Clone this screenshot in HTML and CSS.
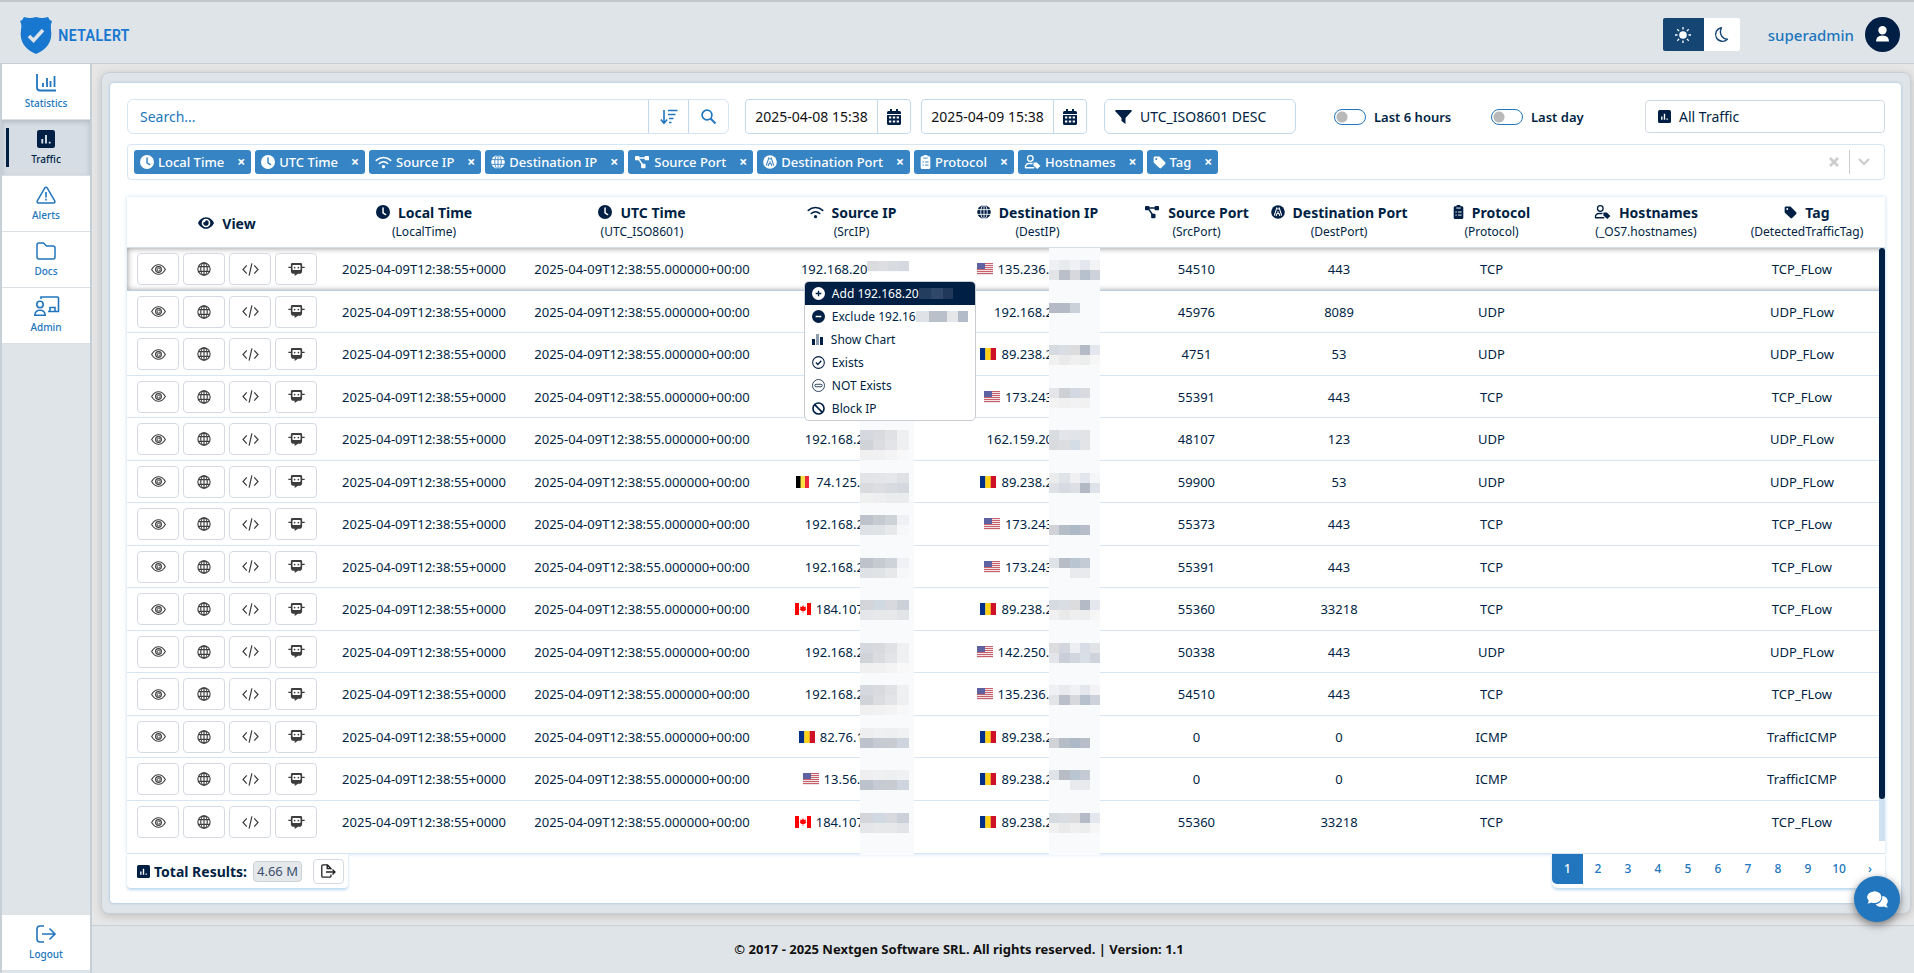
FILE: index.html
```html
<!DOCTYPE html>
<html lang="en">
<head>
<meta charset="utf-8">
<title>NetAlert - Traffic</title>
<link rel="stylesheet" href="styles.css">
</head>
<body>
<svg class="sprite" aria-hidden="true">
  <symbol id="clock" viewBox="0 0 16 16"><path fill-rule="evenodd" d="M16 8A8 8 0 1 1 0 8a8 8 0 0 1 16 0zM8.900 3.500a.8.800 0 0 0-1.700 0V9a.8.800 0 0 0 .35.700l3 1.900a.8.800 0 0 0 .9-1.400L8.900 8.500z"/></symbol>
  <symbol id="wifi" viewBox="0 0 16 16"><g fill="none" stroke="currentColor" stroke-width="1.600" stroke-linecap="round"><path d="M.8 6.400a10.500 10.500 0 0 1 14.400 0"/><path d="M3.800 9.500a6.300 6.300 0 0 1 8.400 0"/></g><circle cx="8" cy="12.700" r="1.600"/></symbol>
  <symbol id="globe-solid" viewBox="0 0 16 16"><circle cx="8" cy="8" r="7.800"/><g fill="none" class="cut" stroke-width="1"><path d="M0 5.300h16M0 10.700h16M8 0v16"/><ellipse cx="8" cy="8" rx="3.700" ry="8"/></g></symbol>
  <symbol id="nodes" viewBox="0 0 16 16"><rect x="0" y="1" width="5" height="5" rx="1"/><rect x="11" y="1" width="5" height="5" rx="1"/><rect x="7" y="10" width="5" height="5" rx="1"/><path d="M4 3.500h8M4.500 5l4 6" fill="none" stroke="currentColor" stroke-width="1.800"/></symbol>
  <symbol id="road" viewBox="0 0 16 16"><circle cx="8" cy="8" r="7.800"/><g fill="none" class="cut" stroke-width="1.200"><path d="M6.800 2.800L3.800 12M9.200 2.800l3 9.200M8 3.500v2M8 7v2M6.500 9.800h3M5.800 12.500l1-2.500M10.200 12.500l-1-2.500"/></g></symbol>
  <symbol id="clip" viewBox="0 0 16 16"><path d="M5.500 1.500A1.500 1.500 0 0 1 7 0h2a1.500 1.500 0 0 1 1.500 1.500H12A1.500 1.500 0 0 1 13.500 3v11.500A1.500 1.500 0 0 1 12 16H4a1.500 1.500 0 0 1-1.500-1.500V3A1.500 1.500 0 0 1 4 1.500z"/><g fill="none" class="cut" stroke-width="1.100"><path d="M5.500 3.500h5M4.500 8h1.500M7.500 8h4M4.500 11.500h1.500M7.500 11.500h4"/></g></symbol>
  <symbol id="usertag" viewBox="0 0 18 16"><circle cx="6.500" cy="4" r="3.200" fill="none" stroke="currentColor" stroke-width="1.500"/><path d="M9 9.700H5.500A4 4 0 0 0 1 14.500h10" fill="none" stroke="currentColor" stroke-width="1.600" stroke-linejoin="round"/><path d="M10 8.500h4l4 4-3.500 3.500L10 12z"/></symbol>
  <symbol id="tag" viewBox="0 0 16 16"><path fill-rule="evenodd" d="M.8 2A1.500 1.500 0 0 1 2.300.500H8l7 7.200a1.500 1.500 0 0 1 0 2L10 14.800a1.500 1.500 0 0 1-2 0L.8 8zM4 5a1.200 1.200 0 1 0 0-2.400A1.200 1.200 0 0 0 4 5z"/></symbol>
  <symbol id="eye-solid" viewBox="0 0 16 16"><path fill-rule="evenodd" d="M8 2.200C3.800 2.200 1.200 5.500 0 8c1.200 2.500 3.800 5.800 8 5.800S14.800 10.500 16 8C14.800 5.500 12.200 2.200 8 2.200zM8 12.300a4.300 4.300 0 1 1 0-8.600 4.300 4.300 0 0 1 0 8.600zM8 5.300a2.700 2.700 0 1 1-2.600 2q1.600.5 2.600-2z"/></symbol>
  <symbol id="eye" viewBox="0 0 16 16"><path d="M.7 8C3 4 5.500 2.900 8 2.900S13 4 15.300 8C13 12 10.500 13.100 8 13.100S3 12 .7 8z" fill="none" stroke="currentColor" stroke-width="1.200"/><circle cx="8" cy="8" r="3.100" fill="none" stroke="currentColor" stroke-width="1.200"/><path d="M8 6.300a1.700 1.700 0 1 1-1.600 1.300Q7.800 7.700 8 6.300z" fill="none" stroke="currentColor" stroke-width=".9"/></symbol>
  <symbol id="globe" viewBox="0 0 16 16"><g fill="none" stroke="currentColor" stroke-width="1.300"><circle cx="8" cy="8" r="7"/><ellipse cx="8" cy="8" rx="3.700" ry="7"/><path d="M1.800 5.300h12.400M1.800 10.700h12.400M8 1v14"/></g></symbol>
  <symbol id="code" viewBox="0 0 18 16"><path d="M5 3.500L1 8l4 4.500M13 3.500L17 8l-4 4.500M10.500 1.500l-3 13" fill="none" stroke="currentColor" stroke-width="1.300"/></symbol>
  <symbol id="bot" viewBox="0 0 18 16"><path fill-rule="evenodd" d="M4.500 1h9A1.500 1.500 0 0 1 15 2.500V5h2.700v1.500H15V9.500a3 3 0 0 1-3 3h-1.500L7 15v-2.500H6a3 3 0 0 1-3-3V6.500H.3V5H3V2.500A1.500 1.500 0 0 1 4.500 1zM5.500 3.200a.8.800 0 0 0-.8.800v3.600a.8.800 0 0 0 .8.800h7a.8.800 0 0 0 .8-.8V4a.8.800 0 0 0-.8-.8z"/><circle cx="7" cy="5.900" r=".9"/><circle cx="11" cy="5.900" r=".9"/></symbol>
  <symbol id="chartbox" viewBox="0 0 16 16"><rect width="16" height="16" rx="2"/><path class="cut" d="M4.700 8v4M8 4.500V12M11.300 10.500v1.500" stroke-width="1.700" fill="none"/></symbol>
  <symbol id="calendar" viewBox="0 0 14 16"><path fill-rule="evenodd" d="M3 0h2v2h4V0h2v2h1.500A1.500 1.500 0 0 1 14 3.500V5H0V3.500A1.500 1.500 0 0 1 1.500 2H3zM0 6h14v8.500a1.500 1.500 0 0 1-1.500 1.500h-11A1.500 1.500 0 0 1 0 14.500zM2 7.500v2h2.300v-2zM5.800 7.500v2h2.400v-2zM9.700 7.500v2H12v-2zM2 11.500v2h2.300v-2zM5.800 11.500v2h2.400v-2zM9.700 11.500v2H12v-2z"/></symbol>
</svg>

<div class="app">
  <header class="topbar">
    <a class="brand" href="#">
      <svg class="brand-mark" viewBox="0 0 32 38"><path d="M4 1Q10 3 16 1q6 2 12 0 1 3 4 4-2 4-1 9c2 12-5 20-15 24C6 34-1 26 1 14 2 9 1 7 0 5q3-1 4-4z"/><path d="M9 20l4.500 4.500L23 14" fill="none" stroke="#dfe4e8" stroke-width="3.500"/></svg>
      <span class="brand-name">NETALERT</span>
    </a>
    <div class="topbar-right">
      <div class="theme">
        <button class="theme-btn theme-on" aria-label="Light theme"><svg width="16" height="16" viewBox="0 0 16 16"><circle cx="8" cy="8" r="3.800"/><path d="M8 0v2.500M8 13.500V16M0 8h2.500M13.500 8H16M2.300 2.300l1.800 1.800M11.900 11.900l1.800 1.800M2.300 13.700l1.800-1.800M11.900 4.100l1.800-1.800" stroke="currentColor" stroke-width="1.300"/></svg></button>
        <button class="theme-btn" aria-label="Dark theme"><svg width="14" height="15" viewBox="0 0 14 16"><path d="M6.500.8A7.300 7.300 0 1 0 12.800 13C8 13 3 7.500 6.500.8z" fill="none" stroke="currentColor" stroke-width="1.500" stroke-linejoin="round"/></svg></button>
      </div>
      <a class="user" href="#">superadmin
        <svg class="avatar" viewBox="0 0 35 35"><circle cx="17.500" cy="17.500" r="17.500"/><path fill="#fff" d="M17.500 9a4.200 4.200 0 1 1 0 8.400 4.200 4.200 0 0 1 0-8.400zM11 24.500q0-6 6.500-6t6.500 6z"/></svg>
      </a>
    </div>
  </header>

  <nav class="side">
    <a class="side-item" href="#"><svg width="20" height="18" viewBox="0 0 20 18"><path d="M1 0v13.500Q1 16.500 4 16.500h16M7 9v4M11 4v9M14.500 7v6M18.500 2v11" fill="none" stroke="currentColor" stroke-width="1.800"/></svg>Statistics</a>
    <a class="side-item side-active" href="#"><svg width="18" height="18"><use href="#chartbox"/></svg>Traffic</a>
    <a class="side-item" href="#"><svg width="20" height="18" viewBox="0 0 20 18"><path d="M10 1.200q.8 0 1.300.9l7.400 12.800q.8 2-1.200 2.200H2.500q-2-.2-1.200-2.200L8.700 2.100Q9.200 1.200 10 1.200z" fill="none" stroke="currentColor" stroke-width="1.500"/><path d="M10 6v5.500M10 12.800v1.800" stroke="currentColor" stroke-width="1.600"/></svg>Alerts</a>
    <a class="side-item" href="#"><svg width="20" height="18" viewBox="0 0 20 18"><path d="M1 3Q1 1 3 1h4.500L10.500 4H17q2 0 2 2v9q0 2-2 2H3q-2 0-2-2z" fill="none" stroke="currentColor" stroke-width="1.500"/></svg>Docs</a>
    <a class="side-item" href="#"><svg width="25" height="20" viewBox="0 0 25 20"><g fill="none" stroke="currentColor" stroke-width="1.600"><circle cx="6" cy="8.500" r="3.200"/><path d="M.8 19.200q.3-5 5.200-5t5.200 5zM7 3V1h16.500q1 0 1 1v13.500H14M16 15v-3.500h5V15"/></g></svg>Admin</a>
    <a class="side-item side-last" href="#"><svg width="20" height="18" viewBox="0 0 20 18"><path d="M8 1H4Q1 1 1 4v10q0 3 3 3h4M6 9h13M13.500 3.500L19 9l-5.500 5.500" fill="none" stroke="currentColor" stroke-width="1.600"/></svg>Logout</a>
  </nav>

  <main class="main">
    <div class="frame"><div class="card">
      <div class="filters">
        <div class="search">
          <input class="search-input" type="text" placeholder="Search..." aria-label="Search">
          <button class="search-btn" aria-label="Sort"><svg width="18" height="16" viewBox="0 0 18 16"><path d="M4 1v13M.8 10.500L4 14.200l3.200-3.700M8 1.500h9.500M8 5.500h7.500M9 9.500h4.500M9 13.500h2.500" fill="none" stroke="currentColor" stroke-width="1.600"/></svg></button>
          <button class="search-btn" aria-label="Run search"><svg width="15" height="15" viewBox="0 0 15 15"><circle cx="6" cy="6" r="4.900" fill="none" stroke="currentColor" stroke-width="1.700"/><path d="M9.500 9.500l5 5" stroke="currentColor" stroke-width="2"/></svg></button>
        </div>
        <div class="date"><input type="text" value="2025-04-08 15:38" aria-label="From"><button aria-label="Pick start date"><svg width="14" height="16"><use href="#calendar"/></svg></button></div>
        <div class="date date-to"><input type="text" value="2025-04-09 15:38" aria-label="To"><button aria-label="Pick end date"><svg width="14" height="16"><use href="#calendar"/></svg></button></div>
        <button class="sortby"><svg width="17" height="14" viewBox="0 0 17 14"><path d="M.8 0h15.400q1 .5.500 1.300L10.500 8v6L6.500 11V8L.3 1.300Q-.2.500.8 0z"/></svg>UTC_ISO8601 DESC</button>
        <label class="switch"><input type="checkbox">Last 6 hours</label>
        <label class="switch switch-day"><input type="checkbox">Last day</label>
        <button class="scope"><svg width="13" height="13"><use href="#chartbox"/></svg>All Traffic</button>
      </div>

      <div class="tags">
        <span class="tag"><svg width="14" height="14"><use href="#clock"/></svg>Local Time<button aria-label="Remove Local Time">×</button></span>
        <span class="tag"><svg width="14" height="14"><use href="#clock"/></svg>UTC Time<button aria-label="Remove UTC Time">×</button></span>
        <span class="tag"><svg width="17" height="16"><use href="#wifi"/></svg>Source IP<button aria-label="Remove Source IP">×</button></span>
        <span class="tag"><svg width="14" height="14"><use href="#globe-solid"/></svg>Destination IP<button aria-label="Remove Destination IP">×</button></span>
        <span class="tag"><svg width="16" height="14"><use href="#nodes"/></svg>Source Port<button aria-label="Remove Source Port">×</button></span>
        <span class="tag"><svg width="14" height="14"><use href="#road"/></svg>Destination Port<button aria-label="Remove Destination Port">×</button></span>
        <span class="tag"><svg width="11" height="14" viewBox="2 0 12 16"><use href="#clip" width="16" height="16"/></svg>Protocol<button aria-label="Remove Protocol">×</button></span>
        <span class="tag"><svg width="17" height="14"><use href="#usertag"/></svg>Hostnames<button aria-label="Remove Hostnames">×</button></span>
        <span class="tag"><svg width="13" height="13"><use href="#tag"/></svg>Tag<button aria-label="Remove Tag">×</button></span>
        <div class="tags-end">
          <button aria-label="Clear all"><svg width="10" height="10" viewBox="0 0 10 10"><path d="M1 1l8 8M9 1L1 9" stroke="currentColor" stroke-width="2.600"/></svg></button>
          <button class="tags-open" aria-label="Open list"><svg width="12" height="8" viewBox="0 0 12 8"><path d="M1 1l5 5 5-5" fill="none" stroke="currentColor" stroke-width="2.200"/></svg></button>
        </div>
      </div>

      <div class="grid-wrap">
        <table class="grid">
          <colgroup><col class="c-view"><col class="c-local"><col class="c-utc"><col class="c-src"><col class="c-dst"><col class="c-sport"><col class="c-dport"><col class="c-proto"><col class="c-host"><col class="c-tag"></colgroup>
          <thead><tr>
            <th><div class="th-name"><svg width="16" height="16"><use href="#eye-solid"/></svg>View</div></th>
            <th><div class="th-name"><svg width="14" height="14"><use href="#clock"/></svg>Local Time</div><small>(LocalTime)</small></th>
            <th><div class="th-name"><svg width="14" height="14"><use href="#clock"/></svg>UTC Time</div><small>(UTC_ISO8601)</small></th>
            <th><div class="th-name"><svg width="17" height="16"><use href="#wifi"/></svg>Source IP</div><small>(SrcIP)</small></th>
            <th><div class="th-name"><svg width="14" height="14"><use href="#globe-solid"/></svg>Destination IP</div><small>(DestIP)</small></th>
            <th><div class="th-name"><svg width="16" height="14"><use href="#nodes"/></svg>Source Port</div><small>(SrcPort)</small></th>
            <th><div class="th-name"><svg width="14" height="14"><use href="#road"/></svg>Destination Port</div><small>(DestPort)</small></th>
            <th><div class="th-name"><svg width="11" height="14" viewBox="2 0 12 16"><use href="#clip" width="16" height="16"/></svg>Protocol</div><small>(Protocol)</small></th>
            <th><div class="th-name"><svg width="17" height="14"><use href="#usertag"/></svg>Hostnames</div><small>(_OS7.hostnames)</small></th>
            <th><div class="th-name"><svg width="13" height="13"><use href="#tag"/></svg>Tag</div><small>(DetectedTrafficTag)</small></th>
          </tr></thead>
          <tbody id="rows"></tbody>
        </table>
        <div class="scroll"><div class="scroll-thumb"></div></div>
        <menu class="menu">
          <li><button class="menu-on"><svg width="13" height="13" viewBox="0 0 16 16"><circle cx="8" cy="8" r="8"/><path d="M4.500 8h7M8 4.500v7" stroke="#001f44" stroke-width="1.700"/></svg>Add 192.168.20<i class="veil veil-dark"></i></button></li>
          <li><button><svg width="13" height="13" viewBox="0 0 16 16"><circle cx="8" cy="8" r="8"/><path d="M4.500 8h7" stroke="#fff" stroke-width="1.700"/></svg>Exclude 192.16<i class="veil"></i></button></li>
          <li><button class="menu-chart"><svg width="11" height="11" viewBox="0 0 11 11"><path d="M0 5h3v6H0zM8 3h3v8H8z"/><path fill="#8d9cae" d="M4 0h3v11H4z"/></svg>Show Chart</button></li>
          <li><button><svg width="13" height="13" viewBox="0 0 16 16"><circle cx="8" cy="8" r="7.200" fill="none" stroke="currentColor" stroke-width="1.300"/><path d="M4.800 8l2.400 2.500 4.200-4.700" fill="none" stroke="currentColor" stroke-width="1.600"/></svg>Exists</button></li>
          <li><button><svg width="13" height="13" viewBox="0 0 16 16"><circle cx="8" cy="8" r="7.400" fill="none" stroke="currentColor" stroke-width="1"/><rect x="3.500" y="6.500" width="9" height="3" rx="1.500" fill="none" stroke="currentColor" stroke-width="1"/></svg>NOT Exists</button></li>
          <li><button><svg width="13" height="13" viewBox="0 0 16 16"><path d="M3 3l10 10" stroke="currentColor" stroke-width="2"/><circle cx="8" cy="8" r="6.800" fill="none" stroke="currentColor" stroke-width="2"/></svg>Block IP</button></li>
        </menu>
      </div>

      <div class="below">
        <div class="total"><svg width="13" height="13"><use href="#chartbox"/></svg><strong>Total Results:</strong><span class="count">4.66 M</span><button class="export" aria-label="Export"><svg width="15" height="14" viewBox="0 0 15 14"><path d="M10 5.500V4.500L6.500.8H2Q.8.800.8 2v10q0 1.200 1.200 1.200h7Q10 13.200 10 12v-1.500M6.200 1v3.500H10M5 8h9M11.500 5.500L14 8l-2.500 2.500" fill="none" stroke="currentColor" stroke-width="1.300"/></svg></button></div>
        <nav class="pages" aria-label="Pages"><a class="page-on" href="#">1</a><a href="#">2</a><a href="#">3</a><a href="#">4</a><a href="#">5</a><a href="#">6</a><a href="#">7</a><a href="#">8</a><a href="#">9</a><a class="page-wide" href="#">10</a><a href="#">›</a></nav>
      </div>
    </div></div>
  </main>

  <footer class="footer">© 2017 - 2025 Nextgen Software SRL. All rights reserved. | Version: 1.1</footer>
</div>
<button class="chat" aria-label="Open chat"><svg width="21" height="17" viewBox="0 0 21 17"><path d="M7.300.5c4 0 7 2.500 7 5.700s-3 5.700-7 5.700q-1.500 0-2.800-.5Q2.500 12.500.5 12.500q1-1.200 1.300-3Q.3 8.100.3 6.200.3 3 7.300.5z"/><ellipse cx="7.300" cy="6" rx="7" ry="5.500"/><path d="M15.300 5c3.200.3 5.500 2.500 5.500 5.200q0 1.800-1.400 3.300.4 1.700 1.400 3-2.200 0-4-1.100-1.200.4-2.500.4c-2.600 0-4.600-1-5.700-2.600 4-.4 7-3.500 6.700-8.200z"/></svg></button>
<script src="app.js"></script>
</body>
</html>
```

FILE: styles.css
```css
:root {
  --navy: #001f44;
  --blue: #2176bd;
  --line: #d6e6f4;
  --shell: #dfe4e8;
  --edge: #c8d0d7;
}

* { box-sizing: border-box; }

body {
  margin: 0;
  font-family: "Noto Sans", sans-serif;
  font-size: 13px;
  color: var(--navy);
}

svg { display: block; flex: none; fill: currentColor; overflow: visible; }
a { color: inherit; text-decoration: none; }
button, input { font: inherit; color: inherit; margin: 0; padding: 0; border: 0; background: none; }
.sprite { position: absolute; width: 0; height: 0; overflow: hidden; }
.cut { stroke: var(--cut, #fff); }

.app {
  display: grid;
  grid-template: auto 1fr auto / 92px 1fr;
  min-height: 100vh;
  background: #e7e7e7;
}

/* top bar */
.topbar {
  grid-column: 1 / 3;
  display: flex;
  align-items: center;
  justify-content: space-between;
  height: 64px;
  padding: 4px 14px 0 20px;
  background: var(--shell);
  border-top: 2px solid #c3c7ca;
  border-bottom: 1px solid var(--edge);
}
.brand { display: flex; align-items: center; gap: 6px; color: #1878d0; }
.brand-mark { width: 32px; height: 38px; }
.brand-name { font-family: "Roboto Condensed", "Liberation Sans Narrow", "Roboto", sans-serif; font-size: 17px; font-weight: 500; line-height: 20px; }
.topbar-right { display: flex; align-items: center; gap: 28px; }
.theme { display: flex; }
.theme-btn { display: grid; place-items: center; width: 36px; height: 33px; background: #fff; color: #154673; border-radius: 0 2px 2px 0; }
.theme-on { width: 41px; background: #154673; color: #fff; border-radius: 2px 0 0 2px; }
.user { display: flex; align-items: center; gap: 11px; font-size: 15px; font-weight: 500; color: var(--blue); }
.avatar { width: 35px; height: 35px; color: var(--navy); }

/* side navigation */
.side {
  grid-row: 2 / 4;
  display: flex;
  flex-direction: column;
  padding-bottom: 2px;
  background: var(--shell);
  border: solid var(--edge);
  border-width: 0 2px;
}
.side-item {
  display: flex;
  flex-direction: column;
  align-items: center;
  justify-content: flex-end;
  gap: 2px;
  height: 56px;
  padding-bottom: 7px;
  background: #fff;
  border-bottom: 1px solid #dbe0e4;
  color: var(--blue);
  font-size: 10px;
  font-weight: 500;
  line-height: 18px;
}
.side-active {
  position: relative;
  --cut: #d6dde5;
  background: #d6dde5;
  color: var(--navy);
  box-shadow: inset 0 2px 5px #b2bac2;
}
.side-active::before { content: ""; position: absolute; left: 4px; top: 8px; bottom: 8px; width: 3px; background: var(--navy); }
.side-last { margin-top: auto; }

/* content shell */
.main { padding: 8px 3px 11px 9px; }
.frame { height: 100%; padding: 10px 9px 10px 8px; background: var(--shell); border: 1px solid var(--edge); border-radius: 8px; box-shadow: 0 2px 10px #bdbdbd; }
.card { display: flex; flex-direction: column; height: 100%; padding: 16px 16px 15px 17px; background: #fff; border-radius: 4px; box-shadow: 0 0 3px #8fbce0; }

/* filter bar */
.filters { display: flex; align-items: center; height: 35px; }
.search { display: flex; flex: 1; height: 35px; border: 1px solid var(--line); border-radius: 6px; }
.search-input { flex: 1; min-width: 0; padding: 0 12px; color: var(--blue); font-size: 14px; outline: none; }
.search-input::placeholder { color: var(--blue); opacity: 1; }
.search-btn { display: grid; place-items: center; width: 40px; border-left: 1px solid #c3d9ed; color: var(--blue); }
.date { display: flex; width: 166px; height: 35px; margin-left: 16px; border: 1px solid #c3d9ed; border-radius: 4px; font-size: 14px; color: #111; }
.date-to { margin-left: 10px; }
.date input { flex: 1; min-width: 0; text-align: center; }
.date button { display: grid; place-items: center; width: 33px; border-left: 1px solid #c3d9ed; color: var(--navy); }
.sortby { display: flex; align-items: center; gap: 8px; width: 192px; height: 35px; margin-left: 17px; padding-left: 10px; border: 1px solid #c3d9ed; border-radius: 6px; font-size: 14px; }
.switch { display: flex; align-items: center; gap: 8px; width: 157px; margin-left: 38px; font-weight: 600; }
.switch-day { width: 154px; margin-left: 0; }
.switch input {
  appearance: none;
  width: 32px;
  height: 16px;
  border: 1px solid var(--blue);
  border-radius: 8px;
  background: radial-gradient(circle at 7px 7px, #b9b9b9 5px, #fff 6px);
}
.scope { display: flex; align-items: center; gap: 8px; width: 240px; height: 33px; padding-left: 12px; border: 1px solid #d3d9e3; border-radius: 4px; font-size: 14px; }

/* column picker */
.tags { display: flex; align-items: center; gap: 4px; height: 36px; margin-top: 10px; padding: 0 6px; border: 1px solid var(--line); border-radius: 4px; }
.tag { display: flex; align-items: center; gap: 4px; height: 24px; padding: 0 6px; border-radius: 3px; background: #3784c4; color: #fff; --cut: #3784c4; font-weight: 500; white-space: nowrap; }
.tag button { margin-left: 9px; font-size: 14px; line-height: 14px; font-weight: 700; }
.tags-end { display: flex; align-items: center; margin-left: auto; color: #ccc; }
.tags-end button { display: grid; place-items: center; width: 30px; height: 24px; }
.tags-end .tags-open { width: 29px; border-left: 1px solid #ccc; }

/* traffic table */
.grid-wrap { position: relative; flex: 1; margin-top: 17px; border-bottom: 1px solid var(--line); box-shadow: 0 0 4px #c6def2; }
.grid { width: 100%; table-layout: fixed; border-collapse: separate; border-spacing: 0; text-align: center; }
.c-view { width: 200px; }
.c-local { width: 11.04%; }
.c-utc { width: 13.76%; }
.c-src { width: 10.07%; }
.c-dst { width: 11.09%; }
.c-sport { width: 7%; }
.c-dport { width: 9.22%; }
.c-proto { width: 8.13%; }
.c-host { width: 9.44%; }
th { height: 51px; padding: 2px 0 0; border-bottom: 1px solid #d5dfe8; font-weight: 400; }
.th-name { display: flex; align-items: center; justify-content: center; gap: 8px; height: 18px; font-size: 14px; font-weight: 700; white-space: nowrap; }
th small { display: block; font-size: 12px; line-height: 22px; }
td { position: relative; height: 43px; padding: 0; border-bottom: 1px solid var(--line); }
tr:nth-child(even) td { height: 42px; }
tr:last-child td { border-bottom: 0; }
td:last-child { padding-right: 10px; }
.row-on { box-shadow: inset 0 0 6px #8a8a8a; }
.row-on td { border-bottom-color: #b5cde2; }
.view { display: flex; gap: 4px; padding-left: 10px; }
.view button { display: grid; place-items: center; width: 42px; height: 32px; border: 1px solid #d5dae2; border-radius: 4px; background: #fff; color: #3d3d3d; }
.ip { display: flex; justify-content: flex-end; gap: 5px; width: 56%; white-space: nowrap; }
.ip-under { width: 58%; }
.ip-src { width: 55%; }
.ip-src.ip-under { width: 57%; }
.ip-first { width: 59%; }
.flag { width: 16px; height: 12px; align-self: center; }

/* redaction mosaics */
.mosaic { position: absolute; left: 56%; top: 0; bottom: -1px; width: 51px; padding-top: 12px; background: #f9fafb; }
.mosaic-src { left: 55%; width: 54px; padding-right: 5px; }
.mosaic-short { left: 59%; top: 13px; bottom: 18px; width: 42px; padding: 0; }
tr:last-child .mosaic { bottom: -12px; }
.tiles { display: flex; height: 10px; }
.tiles i { flex: 1; }
.scroll { position: absolute; right: 0; top: 51px; bottom: 12px; width: 6px; background: #cfe1f1; }
.scroll-thumb { height: 93%; border-radius: 3px; background: var(--navy); }

/* context menu */
.menu { position: absolute; left: 38.5%; top: 84px; width: 172px; margin: 0; padding: 0; list-style: none; background: #fff; border: 1px solid #c8ccd0; border-radius: 5px; overflow: hidden; }
.menu button { display: flex; align-items: center; gap: 7px; width: 100%; height: 23px; padding-left: 7px; font-size: 12px; }
.menu .menu-on { background: var(--navy); color: #fff; }
.menu .menu-chart { gap: 8px; }
.veil { width: 52px; height: 11px; margin-left: -7px; background: linear-gradient(90deg, #dfe2e6 25%, #b9c0ca 25% 60%, #e4e6e9 60% 80%, #b3bbc8 80%); }
.veil-dark { width: 34px; background: linear-gradient(90deg, #233d5e 35%, #2f486a 35% 70%, #20395b 70%); }

/* summary and pages */
.below { display: flex; align-items: flex-start; justify-content: space-between; }
.total { display: flex; align-items: center; gap: 4px; width: 221px; height: 34px; padding: 0 4px 0 10px; background: #fff; border-radius: 0 0 4px 4px; box-shadow: 0 2px 3px #bcd8ef; font-size: 14px; position: relative; }
.count { margin-left: 2px; padding: 0 3px; line-height: 19px; background: #e4e8eb; border: 1px solid #cdd2d7; border-radius: 4px; color: #3c4f6c; font-size: 13px; }
.export { display: grid; place-items: center; width: 31px; height: 25px; margin-left: auto; border: 1px solid #d5dae2; border-radius: 4px; color: #222; }
.pages { display: flex; position: relative; height: 34px; background: #fff; border-radius: 0 0 6px 6px; box-shadow: 0 2px 3px #bcd8ef; color: var(--blue); font-size: 12px; font-weight: 500; line-height: 30px; text-align: center; }
.pages a { width: 30px; height: 30px; }
.pages .page-on { width: 31px; background: var(--blue); color: #fff; border-radius: 0 0 0 5px; }
.pages .page-wide { width: 32px; }

.footer { padding-right: 88px; line-height: 47px; text-align: center; font-size: 13px; font-weight: 700; color: #111; background: var(--shell); border-top: 1px solid var(--edge); }
.chat { position: fixed; right: 14px; bottom: 51px; display: grid; place-items: center; width: 46px; height: 46px; border-radius: 50%; background: var(--blue); color: #fff; box-shadow: 0 3px 8px #777; }
```

FILE: app.js
```js
const LOCAL = "2025-04-09T12:38:55+0000";
const UTC = "2025-04-09T12:38:55.000000+00:00";

const FLAGS = {
  us: '<path fill="#f1e4e6" d="M0 0h16v12H0z"/><path stroke="#c8606b" d="M0 .5h16M0 2.500h16M0 4.500h16M0 6.500h16M0 8.500h16M0 10.500h16"/><path fill="#5f62a0" d="M0 0h8v6H0z"/>',
  ro: '<path fill="#002f87" d="M0 0h5.500v12H0z"/><path fill="#fcd116" d="M5.300 0h5.500v12H5.300z"/><path fill="#ce1126" d="M10.700 0H16v12h-5.300z"/>',
  be: '<path fill="#000" d="M1 0h5v12H1z"/><path fill="#fae042" d="M5.500 0h5v12h-5z"/><path fill="#ed2939" d="M10 0h4v12h-4z"/>',
  ca: '<path fill="#fff" d="M0 0h16v12H0z"/><path fill="#f00" d="M0 0h4v12H0zM12 0h4v12h-4zM8 2l1 2 2-.5-.5 2 1 .8-2 1.700H8.300V10h-.6V8H6.500l-2-1.700 1-.8-.5-2 2 .5z"/>'
};

/* each mosaic is a list of strips, each strip a list of tile colours */
const S1 = [["#d6d8df", "#d8dade", "#e0e1e5", "#eff0f2"], ["#d0d4d9", "#dadce0", "#e3e4e8", "#eff0f2"], ["#f0f0f0", "#f1f1f2", "#f4f4f5", "#f8f8f9"]];
const S2 = [["#e2e4e8", "#e4e5e8", "#e6e7ea", "#dfe1e5"], ["#d9dbdf", "#dcdee2", "#d8dbe0", "#d5d8de"], ["#eff0f0", "#eeeef0", "#ebecee", "#ebecee"]];
const S3 = [["#bec2cb", "#c6cad1", "#ced2d9", "#eff1f4"], ["#dee1e5", "#e0e3e6", "#e7e8ea", "#f6f7f8"]];
const S4 = [["#d3d5da", "#d0d8e2", "#d7d9de", "#ccd1d9"], ["#e5e6e9", "#e7e8ea", "#e6e8ea", "#e2e4e8"]];
const S5 = [["#eeeef0", "#eff0f2", "#eeeff1", "#f0f1f2"], ["#bdc3cd", "#c6cbd3", "#c8cbd2", "#ced5de"]];
const D1 = [["#eff0f3", "#e8eaee", "#eff1f5", "#e4e8ee", "#f3f3f6"], ["#e2e4e8", "#bbbfc9", "#d6d8dd", "#b7c1cd", "#cdd2db"]];
const D2 = [["#b4bbc6", "#b4bbc6", "#cbd1d9", "#f9fafb", "#f9fafb"]];
const D3 = [["#d6dae1", "#dadee4", "#dcdcdf", "#b4bbc6", "#e4e8ee"], ["#f0f0f0", "#eaeaeb", "#efeff0", "#eceded", "#f6f6f7"]];
const D4 = [["#e4e5e8", "#cfd0d6", "#d2d9e3", "#d8dadf", "#f9fafb"], ["#f3f3f4", "#f0f0f1", "#f2f2f4", "#f1f1f2", "#f9fafb"]];
const D5 = [["#d9dce1", "#e3e5e8", "#e1e4e8", "#e2e3e7", "#f9fafb"], ["#d9dbdf", "#dcdde1", "#d4dce6", "#e3e4e7", "#f9fafb"]];
const D6 = [["#e9ebed", "#dfe2e6", "#f0f0f2", "#e3e7ed", "#f5f6f8"], ["#dee1e6", "#d7dbe1", "#dcdfe4", "#b2b9c4", "#dee3e9"]];
const D7 = [["#f9fafb"], ["#d0d2d7", "#b5bdc7", "#adb9c7", "#b7bec9", "#f9fafb"]];
const D8 = [["#dfe3e8", "#b7bcc5", "#bac5d2", "#c5cbd4", "#f9fafb"], ["#f9fafb", "#f9fafb", "#e9eaed", "#e9eaed", "#f9fafb"]];
const D9 = [["#dddde0", "#d3d6de", "#eceef1", "#d8dde5", "#e1e3e7"], ["#e4e5e8", "#c9ced8", "#d2d6df", "#d9dfe7", "#cfd3db"]];

const rows = [
  ["", "192.168.20", S2, "us", "135.236.", D1, 54510, 443, "TCP", "TCP_FLow"],
  ["", "", null, "", "192.168.2", D2, 45976, 8089, "UDP", "UDP_FLow"],
  ["", "", null, "ro", "89.238.2", D3, 4751, 53, "UDP", "UDP_FLow"],
  ["", "", null, "us", "173.243", D4, 55391, 443, "TCP", "TCP_FLow"],
  ["", "192.168.2", S1, "", "162.159.20", D5, 48107, 123, "UDP", "UDP_FLow"],
  ["be", "74.125.", S2, "ro", "89.238.2", D6, 59900, 53, "UDP", "UDP_FLow"],
  ["", "192.168.2", S3, "us", "173.243", D7, 55373, 443, "TCP", "TCP_FLow"],
  ["", "192.168.2", S3, "us", "173.243", D8, 55391, 443, "TCP", "TCP_FLow"],
  ["ca", "184.107", S4, "ro", "89.238.2", D3, 55360, 33218, "TCP", "TCP_FLow"],
  ["", "192.168.2", S1, "us", "142.250.", D9, 50338, 443, "UDP", "UDP_FLow"],
  ["", "192.168.2", S1, "us", "135.236.", D1, 54510, 443, "TCP", "TCP_FLow"],
  ["ro", "82.76.1", S5, "ro", "89.238.2", D7, 0, 0, "ICMP", "TrafficICMP"],
  ["us", "13.56.", S5, "ro", "89.238.2", D8, 0, 0, "ICMP", "TrafficICMP"],
  ["ca", "184.107", S4, "ro", "89.238.2", D3, 55360, 33218, "TCP", "TCP_FLow"]
];

const strip = colours => `<span class="tiles">${colours.map(c => `<i style="background:${c}"></i>`).join("")}</span>`;
const mosaic = (strips, kind) => strips ? `<div class="mosaic ${kind}">${strips.map(strip).join("")}</div>` : "";
const flag = code => code ? `<svg class="flag" viewBox="0 0 16 12">${FLAGS[code]}</svg>` : "";
/* a number cut in half runs on below the mosaic */
const ip = (code, text, kind) => `<div class="ip ${text.endsWith(".") ? "" : "ip-under"} ${kind}">${flag(code)}${text}</div>`;
const button = (icon, label, w) => `<button aria-label="${label}"><svg width="${w}" height="${w === 17 ? 15 : w}"><use href="#${icon}"/></svg></button>`;
const views = button("eye", "Details", 15) + button("globe", "Lookup", 14) + button("code", "Raw", 17) + button("bot", "Ask", 17);

document.getElementById("rows").innerHTML = rows.map((r, n) => `
  <tr class="${n ? "" : "row-on"}">
    <td><div class="view">${views}</div></td>
    <td>${LOCAL}</td><td>${UTC}</td>
    <td>${ip(r[0], r[1], n ? "ip-src" : "ip-first")}${mosaic(n ? r[2] : [r[2][1]], n ? "mosaic-src" : "mosaic-short")}</td>
    <td>${ip(r[3], r[4], "")}${mosaic(r[5], "")}</td>
    <td>${r[6]}</td><td>${r[7]}</td><td>${r[8]}</td><td></td><td>${r[9]}</td>
  </tr>`).join("");
```
